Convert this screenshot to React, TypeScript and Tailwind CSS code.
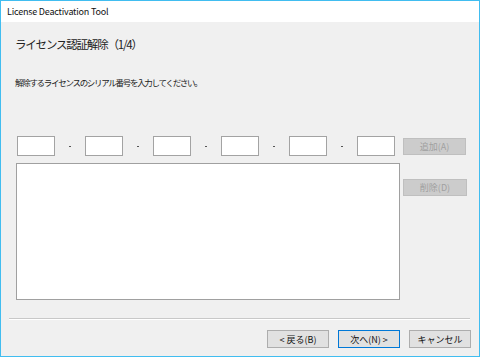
import React from "react";

const font = { fontFamily: '"Noto Sans CJK JP", "Noto Sans", sans-serif' };

function Box() {
  return <div className="w-[38px] h-[20px] bg-white border border-[#a3a3a3] shrink-0" />;
}

function Dash() {
  return (
    <div className="w-[30px] h-[20px] flex items-center justify-center shrink-0">
      <div className="w-[2px] h-[1px] bg-[#555]" />
    </div>
  );
}

function Btn({ children, primary, disabled, className = "" }: { children: React.ReactNode; primary?: boolean; disabled?: boolean; className?: string }) {
  return (
    <div
      className={
        "flex items-center justify-center text-[9px] leading-none shrink-0 " +
        (disabled
          ? "bg-[#cccccc] border border-[#bfbfbf] text-[#a0a0a0] "
          : primary
          ? "bg-[#e1e1e1] border border-[#0078d7] text-[#111] "
          : "bg-[#e1e1e1] border border-[#adadad] text-[#111] ") +
        className
      }
    >
      {children}
    </div>
  );
}

export default function App() {
  return (
    <div style={font} className="w-[480px] h-[357px] border border-[#41bdf0] bg-[#f0f0f0] flex flex-col overflow-hidden">
      <div className="h-[21px] bg-white flex items-center pl-[6px] text-[9px] tracking-[-0.2px] text-[#111] shrink-0">
        License Deactivation Tool
      </div>
      <div className="flex-1 flex flex-col">
        <div className="mt-[13px] ml-[14px] text-[11.5px] tracking-[-1.2px] leading-[18px] text-[#222]">ライセンス認証解除（1/4）</div>
        <div className="mt-[22px] ml-[14px] text-[8.5px] tracking-[-1.3px] leading-[14px] text-[#222]">解除するライセンスのシリアル番号を入力してください。</div>
        <div className="mt-[47px] ml-[16px] flex items-start">
          <Box />
          <Dash />
          <Box />
          <Dash />
          <Box />
          <Dash />
          <Box />
          <Dash />
          <Box />
          <Dash />
          <Box />
          <Btn disabled className="ml-[8px] mt-[2px] w-[63px] h-[17px]">追加(A)</Btn>
        </div>
        <div className="mt-[7px] ml-[15px] flex items-start">
          <div className="w-[384px] h-[137px] bg-white border border-[#a0a0a0] shrink-0" />
          <Btn disabled className="ml-[3px] mt-[16px] w-[64px] h-[17px]">削除(D)</Btn>
        </div>
        <div className="mt-[18px] ml-[8px] w-[461px] h-[2px] border-t border-[#c8c8c8] border-b-white border-b" />
        <div className="mt-[10px] flex justify-end pr-[8px] gap-[9px]">
          <Btn className="w-[62px] h-[18px]">&lt; 戻る(B)</Btn>
          <Btn primary className="w-[62px] h-[18px]">次へ(N) &gt;</Btn>
          <Btn className="w-[62px] h-[18px]">キャンセル</Btn>
        </div>
      </div>
    </div>
  );
}
